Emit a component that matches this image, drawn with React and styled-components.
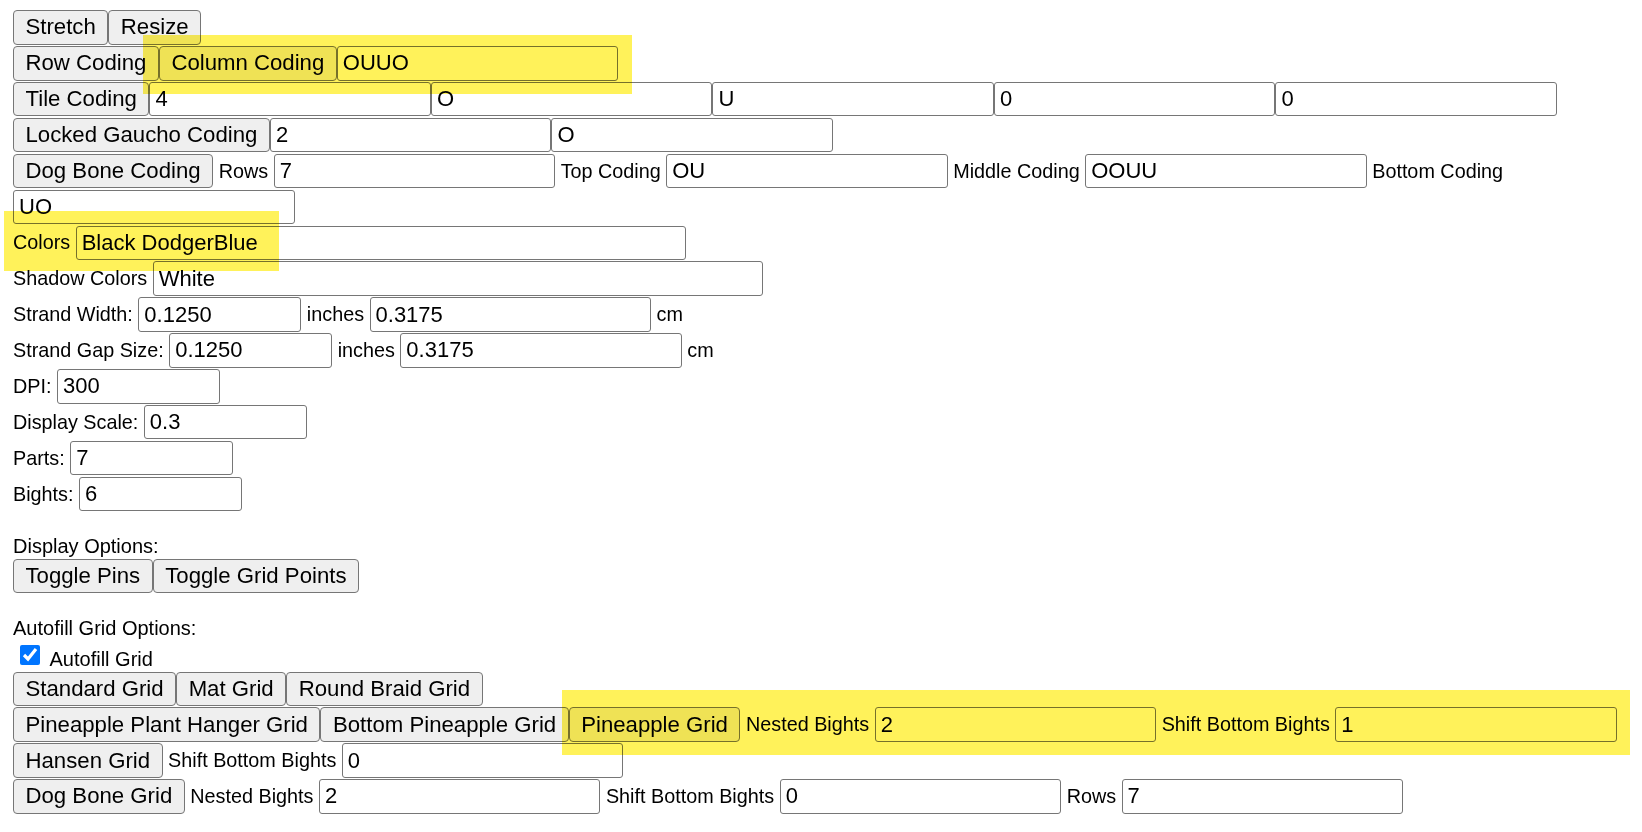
import React from 'react';
import styled, { createGlobalStyle } from 'styled-components';

const GlobalStyle = createGlobalStyle`
    body {
        margin: 0;
        background: #fff;
        font-family: "Liberation Sans", Arial, sans-serif;
        color: #000;
    }
`;

const Page = styled.div`
    position: relative;
    padding: 9.5px 0 20px 13px;
`;

const Row = styled.div`
    display: flex;
    align-items: center;
    height: 35.9px;
    white-space: nowrap;
`;

const Button = styled.button`
    box-sizing: border-box;
    height: 34.5px;
    padding: 0 11.5px;
    font-family: inherit;
    font-size: 22.2px;
    color: #000;
    background: #efefef;
    border: 1px solid #767676;
    border-radius: 4px;
    cursor: pointer;
`;

const Field = styled.input`
    box-sizing: border-box;
    width: ${p => p.$w || 281.5}px;
    height: 34.5px;
    padding: 0 5px;
    font-family: inherit;
    font-size: 22px;
    color: #000;
    background: #fff;
    border: 1px solid #767676;
    border-radius: 3px;
    outline: none;
`;

const Label = styled.span`
    font-size: 19.8px;
    margin: 0 5.5px;

    &:first-child {
        margin-left: 0;
    }
`;

const TextLine = styled.div`
    font-size: 20px;
    line-height: 23px;
    height: 23px;
`;

const CheckRow = styled.label`
    display: flex;
    align-items: center;
    height: 31px;
    font-size: 20px;
`;

const Check = styled.input`
    width: 20px;
    height: 20px;
    margin: 0 9.5px 0 7px;
    accent-color: #0075ff;
`;

const CheckText = styled.span`
    padding-top: 8px;
`;

const Highlight = styled.div`
    position: absolute;
    left: ${p => p.$x}px;
    top: ${p => p.$y}px;
    width: ${p => p.$w}px;
    height: ${p => p.$h}px;
    background: #fff25a;
    mix-blend-mode: multiply;
    pointer-events: none;
`;

const SMALL = 163;

const Input = ({ value, w }) => <Field $w={w} defaultValue={value} />;

export default function App() {
    return (
        <Page>
            <GlobalStyle />
            <Row>
                <Button>Stretch</Button>
                <Button>Resize</Button>
            </Row>
            <Row>
                <Button>Row Coding</Button>
                <Button>Column Coding</Button>
                <Input value="OUUO" />
            </Row>
            <Row>
                <Button>Tile Coding</Button>
                <Input value="4" />
                <Input value="O" />
                <Input value="U" />
                <Input value="0" />
                <Input value="0" />
            </Row>
            <Row>
                <Button>Locked Gaucho Coding</Button>
                <Input value="2" />
                <Input value="O" />
            </Row>
            <Row>
                <Button>Dog Bone Coding</Button>
                <Label>Rows</Label>
                <Input value="7" />
                <Label>Top Coding</Label>
                <Input value="OU" />
                <Label>Middle Coding</Label>
                <Input value="OOUU" />
                <Label>Bottom Coding</Label>
            </Row>
            <Row>
                <Input value="UO" />
            </Row>
            <Row>
                <Label>Colors</Label>
                <Input value="Black DodgerBlue" w={610} />
            </Row>
            <Row>
                <Label>Shadow Colors</Label>
                <Input value="White" w={610} />
            </Row>
            <Row>
                <Label>Strand Width:</Label>
                <Input value="0.1250" w={SMALL} />
                <Label>inches</Label>
                <Input value="0.3175" />
                <Label>cm</Label>
            </Row>
            <Row>
                <Label>Strand Gap Size:</Label>
                <Input value="0.1250" w={SMALL} />
                <Label>inches</Label>
                <Input value="0.3175" />
                <Label>cm</Label>
            </Row>
            <Row>
                <Label>DPI:</Label>
                <Input value="300" w={SMALL} />
            </Row>
            <Row>
                <Label>Display Scale:</Label>
                <Input value="0.3" w={SMALL} />
            </Row>
            <Row>
                <Label>Parts:</Label>
                <Input value="7" w={SMALL} />
            </Row>
            <Row>
                <Label>Bights:</Label>
                <Input value="6" w={SMALL} />
            </Row>

            <TextLine />
            <TextLine>Display Options:</TextLine>
            <Row>
                <Button>Toggle Pins</Button>
                <Button>Toggle Grid Points</Button>
            </Row>

            <TextLine />
            <TextLine>Autofill Grid Options:</TextLine>
            <CheckRow>
                <Check type="checkbox" defaultChecked />
                <CheckText>Autofill Grid</CheckText>
            </CheckRow>
            <Row>
                <Button>Standard Grid</Button>
                <Button>Mat Grid</Button>
                <Button>Round Braid Grid</Button>
            </Row>
            <Row>
                <Button>Pineapple Plant Hanger Grid</Button>
                <Button>Bottom Pineapple Grid</Button>
                <Button>Pineapple Grid</Button>
                <Label>Nested Bights</Label>
                <Input value="2" />
                <Label>Shift Bottom Bights</Label>
                <Input value="1" />
            </Row>
            <Row>
                <Button>Hansen Grid</Button>
                <Label>Shift Bottom Bights</Label>
                <Input value="0" />
            </Row>
            <Row>
                <Button>Dog Bone Grid</Button>
                <Label>Nested Bights</Label>
                <Input value="2" />
                <Label>Shift Bottom Bights</Label>
                <Input value="0" />
                <Label>Rows</Label>
                <Input value="7" />
            </Row>

            <Highlight $x={142.5} $y={35} $w={489} $h={59} />
            <Highlight $x={4} $y={211} $w={275} $h={60} />
            <Highlight $x={562} $y={690} $w={1068} $h={65} />
        </Page>
    );
}
